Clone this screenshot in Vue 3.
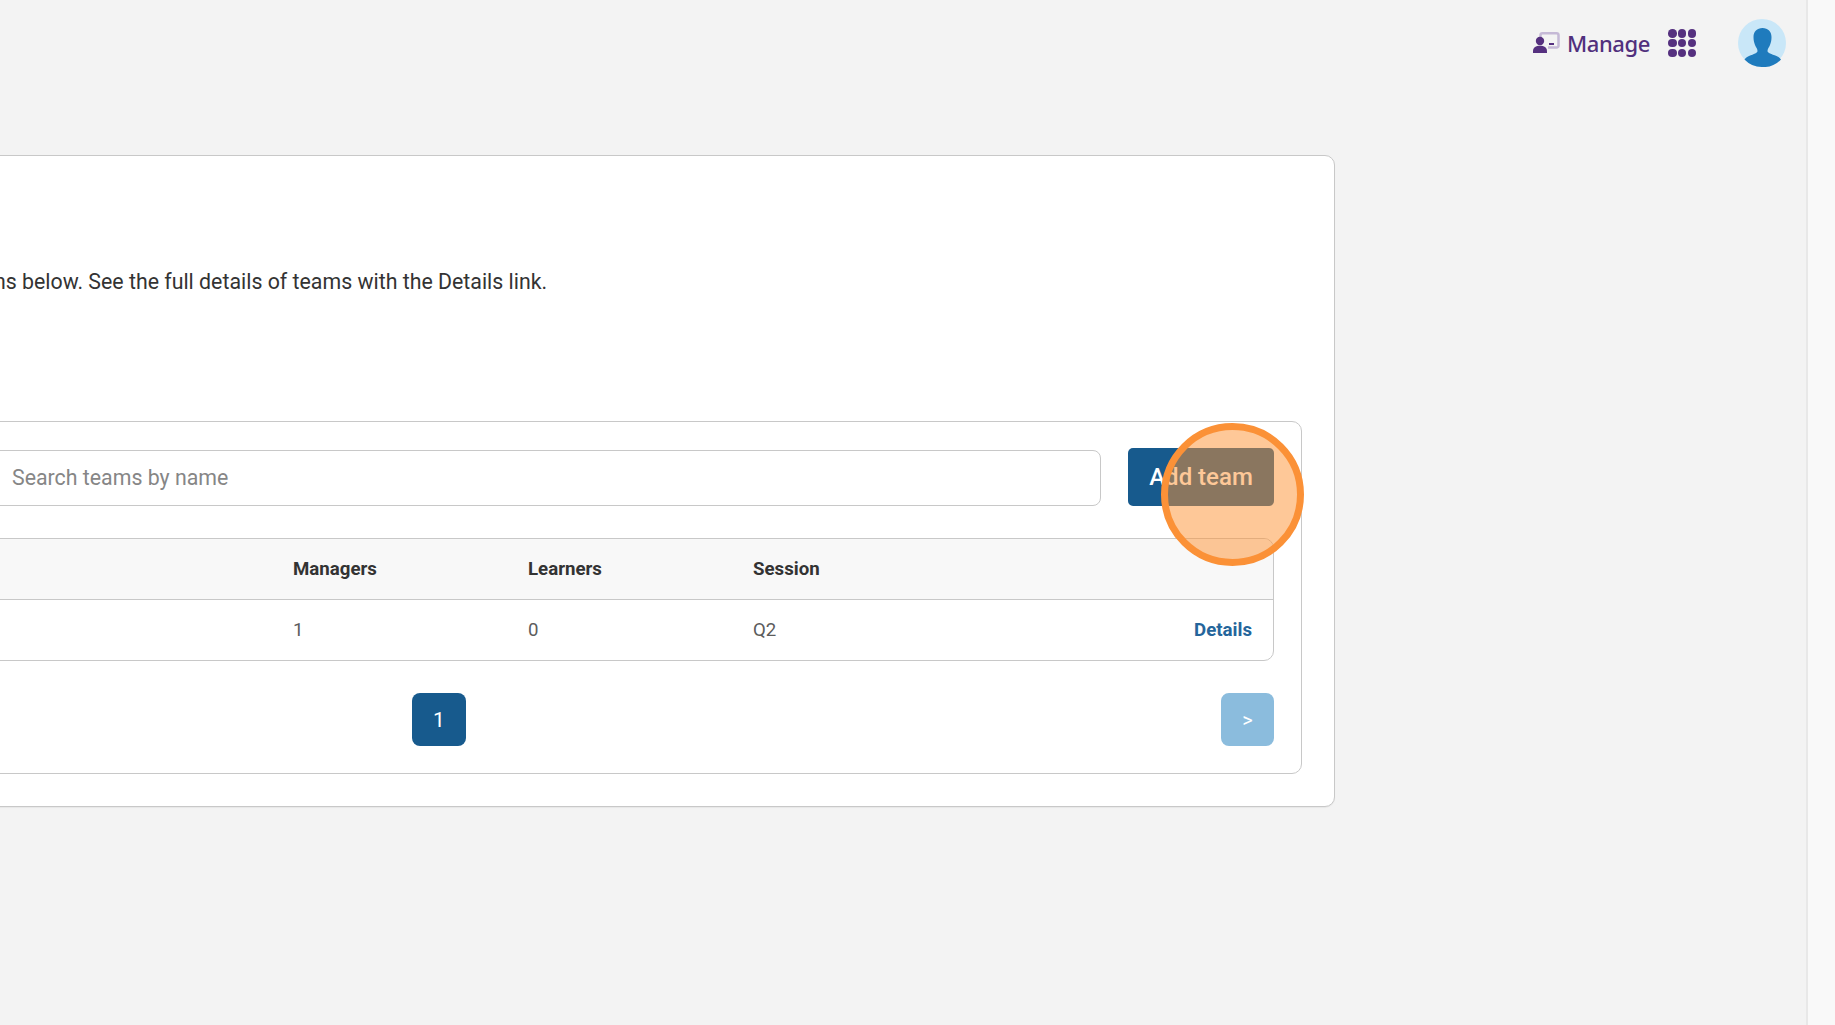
<script setup>
const columns = ['Managers', 'Learners', 'Session', '']
const row = ['1', '0', 'Q2']
</script>

<template>
  <div class="page">
    <main class="content">
      <header class="topbar">
        <a class="manage">
          <svg class="manage-icon" width="27" height="21" viewBox="0 0 27 21">
            <path d="M7.500 5V3A1.800 1.800 0 0 1 9.300 1.250h14.400A1.800 1.800 0 0 1 25.500 3v10.700a1.800 1.800 0 0 1-1.800 1.800H15" fill="none" stroke="#c5b9d6" stroke-width="2.500"/>
            <rect x="16" y="11" width="5" height="2" fill="#55307f"/>
            <circle cx="7" cy="9" r="4.200" fill="#55307f"/>
            <path d="M0 21v-1.800C0 15.500 3 13.800 7 13.800s7 1.700 7 5.400V21z" fill="#55307f"/>
          </svg>
          <span>Manage</span>
        </a>
        <div class="apps">
          <i v-for="n in 9" :key="n"></i>
        </div>
        <svg class="avatar" width="48" height="48" viewBox="0 0 48 48">
          <circle cx="24" cy="24" r="24" fill="#c9e7f8"/>
          <path d="M24.500 9c5.500 0 9 3.500 9 9 0 3-.5 5.500-1.500 8-1 2.500-2.500 3.800-2.500 6 0 2 4 3 9 5 2 .8 3.500 2 4.500 3.500A24 24 0 0 1 24 48 24 24 0 0 1 6.500 40.500C7.500 39 9 37.800 11 37c5-2 8.500-3 8.500-5 0-2.200-1.500-3.500-2.500-6-1-2.500-1.500-5-1.500-8 0-5.500 3.500-9 9-9z" fill="#1f7bbd"/>
        </svg>
      </header>

      <section class="card">
        <p class="intro">ns below. See the full details of teams with the Details link.</p>
        <div class="panel">
          <div class="toolbar">
            <input class="search" placeholder="Search teams by name" />
            <button class="add">Add team</button>
          </div>
          <div class="table">
            <div class="tr head">
              <span v-for="c in columns" :key="c">{{ c }}</span>
            </div>
            <div class="tr body">
              <span v-for="c in row" :key="c">{{ c }}</span>
              <a class="details">Details</a>
            </div>
          </div>
          <nav class="pager">
            <button class="pg current">1</button>
            <button class="pg next">&gt;</button>
          </nav>
        </div>
      </section>
    </main>
    <aside class="scrollbar"></aside>
    <div class="highlight"></div>
  </div>
</template>

<style scoped>
.page {
  position: relative;
  display: flex;
  width: 1835px;
  height: 1025px;
  overflow: hidden;
  background: #f3f3f3;
  font-family: Roboto, "Liberation Sans", sans-serif;
  color: #333;
}
.content {
  flex: 1;
  min-width: 0;
}
.topbar {
  display: flex;
  align-items: center;
  height: 86px;
  padding-right: 20px;
  justify-content: flex-end;
}
.manage {
  display: flex;
  align-items: center;
  gap: 7px;
  color: #51307d;
  font-family: "Noto Sans", sans-serif;
  font-weight: 500;
  font-size: 22px;
  letter-spacing: -0.4px;
}
.manage-icon {
  margin-top: -2px;
}
.apps {
  display: grid;
  grid-template-columns: repeat(3, 8.500px);
  grid-auto-rows: 8.500px;
  gap: 1.250px;
  margin-left: 18px;
  margin-right: 42px;
}
.apps i {
  border-radius: 50%;
  background: #55307f;
}
.card {
  box-sizing: border-box;
  width: 1355px;
  height: 652px;
  margin-top: 69px;
  margin-left: -20px;
  padding: 0 32px 27px 20px;
  background: #fff;
  border: 1px solid #c8c8c8;
  border-radius: 10px;
  display: flex;
  flex-direction: column;
  box-shadow: 0 1px 1px rgba(0,0,0,.05);
}
.intro {
  margin: 112px 0 0 -7px;
  font-size: 21.330px;
  line-height: 28px;
  white-space: nowrap;
}
.panel {
  box-sizing: border-box;
  margin-left: -20px;
  margin-top: 125px;
  height: 353px;
  padding: 26px 27px 0 0;
  border: 1px solid #c8c8c8;
  border-radius: 10px;
}
.toolbar {
  display: flex;
  align-items: flex-end;
  height: 58px;
}
.search {
  box-sizing: border-box;
  flex: 1;
  height: 56px;
  padding: 0 12px 2px 29px;
  border: 1px solid #c8c8c8;
  border-radius: 8px;
  font: 21.330px Roboto, sans-serif;
  outline: none;
}
.search::placeholder {
  color: #868686;
  opacity: 1;
}
.add {
  align-self: flex-start;
  width: 146px;
  height: 58px;
  margin-left: 27px;
  border: 0;
  border-radius: 5px;
  background: #175a8d;
  color: #fff;
  font: 500 24px Roboto, sans-serif;
}
.table {
  margin-top: 32px;
  border: 1px solid #c8c8c8;
  border-radius: 10px;
  overflow: hidden;
}
.tr {
  box-sizing: border-box;
  display: grid;
  grid-template-columns: 235px 225px 1fr auto;
  align-items: center;
  height: 60px;
  padding: 0 21px 1px 310px;
  font-size: 18.670px;
}
.head {
  height: 61px;
  background: #f8f8f8;
  border-bottom: 1px solid #c8c8c8;
  font-weight: 700;
}
.body {
  color: #5c5c5c;
}
.details {
  color: #24659b;
  font-weight: 700;
}
.pager {
  display: flex;
  margin-top: 32px;
}
.pg {
  height: 53px;
  border: 0;
  border-radius: 8px;
  color: #fff;
  font: 21px Roboto, sans-serif;
}
.current {
  width: 54px;
  margin-left: 430px;
  background: #175a8d;
}
.next {
  width: 53px;
  margin-left: auto;
  background: #8bbcdd;
  font-size: 20px;
}
.scrollbar {
  box-sizing: border-box;
  width: 29px;
  background: #f9f9f9;
  border-left: 2px solid #e8e8e8;
}
.highlight {
  position: absolute;
  left: 1161px;
  top: 423px;
  width: 143px;
  height: 143px;
  box-sizing: border-box;
  border: 7px solid #fb9137;
  border-radius: 50%;
  background: rgba(254, 146, 50, .5);
}
</style>
